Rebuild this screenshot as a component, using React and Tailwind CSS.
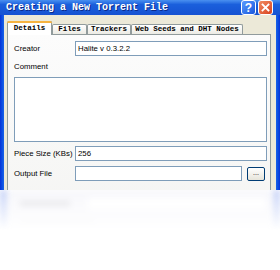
export default function App() {
  return (
    <div className="w-[280px] h-[270px] bg-white overflow-hidden">
      <div className="h-[190px] overflow-hidden flex flex-col">
        <TitleBar />
        <div className="flex flex-1">
          <div className="w-[4px] bg-gradient-to-r from-[#0831d9] to-[#1a63e8]" />
          <div className="flex-1 bg-[#ece9d8] pl-[3px] pr-[5px] pt-[6px]">
            <Tabs />
            <div className="border border-[#919b9c] bg-gradient-to-b from-[#fcfcfc] to-[#f4f4f2] pt-[6px] pl-[6px] pr-[3px] h-[200px]">
              <Row label="Creator" value="Halite v 0.3.2.2" />
              <div className="h-[21px] flex items-center text-[7.8px] text-black font-['Liberation_Sans',sans-serif]">Comment</div>
              <div className="h-[65px] border border-[#7f9db9] bg-white" />
              <div className="mt-[4px]">
                <Row label="Piece Size (KBs)" value="256" />
              </div>
              <div className="mt-[5px] flex items-center h-[15px] text-black">
                <div className="w-[61px] text-[7.8px] font-['Liberation_Sans',sans-serif]">Output File</div>
                <div className="flex-1 h-[15px] border border-[#7f9db9] bg-white" />
                <button className="ml-[5px] mr-[2px] w-[18px] h-[14px] rounded-[2px] border border-[#003c74] bg-gradient-to-b from-white to-[#e6e4da] text-[7px] text-black leading-none pb-[2px] font-['Liberation_Sans',sans-serif]">...</button>
              </div>
            </div>
          </div>
          <div className="w-[4px] bg-gradient-to-r from-[#1a63e8] to-[#0831d9]" />
        </div>
      </div>
      <Reflection />
    </div>
  );
}

function TitleBar() {
  return (
    <div className="h-[21px] flex items-center pl-[6px] pr-[7px] bg-gradient-to-b from-[#4a90f0] via-[#1a5fdc] via-30% to-[#1652d2]">
      <div className="flex-1 text-white font-bold text-[10px] leading-none font-['Liberation_Mono',monospace] [text-shadow:1px_1px_#0b2a8a] whitespace-nowrap">
        Creating a New Torrent File
      </div>
      <div className="flex gap-[2px]">
        <div className="w-[15px] h-[15px] rounded-[3px] border border-white bg-gradient-to-br from-[#5a9bff] to-[#1a55dc] flex items-center justify-center text-white font-bold text-[12px] leading-none font-['Liberation_Sans',sans-serif]">?</div>
        <div className="w-[15px] h-[15px] rounded-[3px] border border-white bg-gradient-to-br from-[#f08a60] to-[#d8401c] flex items-center justify-center">
          <svg width="9" height="9" viewBox="0 0 9 9">
            <path d="M1.5 1.5L7.5 7.5M7.5 1.5L1.5 7.5" stroke="white" strokeWidth="1.8" strokeLinecap="square" />
          </svg>
        </div>
      </div>
    </div>
  );
}

function Tabs() {
  const tab = "h-[10px] border border-b-0 border-[#919b9c] rounded-t-[2px] bg-gradient-to-b from-white to-[#ecebe4] flex items-center justify-center text-[7.5px] font-bold leading-none font-['Liberation_Mono',monospace] whitespace-nowrap";
  return (
    <div className="flex items-end h-[13px]">
      <div className="relative z-10 -mb-px w-[45px] h-[14px] border border-b-0 border-[#919b9c] rounded-t-[2px] bg-white flex flex-col">
        <div className="h-[2px] -mx-px -mt-px rounded-t-[2px] bg-[#f6b340]" />
        <div className="flex-1 flex items-center justify-center text-[7.5px] font-bold leading-none font-['Liberation_Mono',monospace]">Details</div>
      </div>
      <div className={`${tab} w-[35px]`}>Files</div>
      <div className={`${tab} w-[44px]`}>Trackers</div>
      <div className={`${tab} w-[112px]`}>Web Seeds and DHT Nodes</div>
    </div>
  );
}

function Row({ label, value }) {
  return (
    <div className="flex items-center h-[15px] font-['Liberation_Sans',sans-serif] text-[7.8px] text-black">
      <div className="w-[61px] whitespace-nowrap">{label}</div>
      <div className="flex-1 h-[15px] border border-[#7f9db9] bg-white flex items-center pl-[2px]">{value}</div>
    </div>
  );
}

function Reflection() {
  return (
    <div className="h-[80px] overflow-hidden blur-[3px] [mask-image:linear-gradient(to_bottom,black,transparent_50%)]">
      <div className="flex h-full">
        <div className="w-[6px] bg-[#8aa4f0] opacity-60" />
        <div className="flex-1 bg-[#f7f7fb] pl-[14px] pr-[8px] pt-[7px]">
          <div className="flex items-center h-[13px]">
            <div className="w-[50px] h-[4px] bg-[#d8d8dc]" />
            <div className="ml-[18px] flex-1 h-[12px] bg-white" />
          </div>
          <div className="mt-[12px] w-[75px] h-[3px] bg-[#e6e6ea]" />
        </div>
        <div className="w-[6px] bg-[#8aa4f0] opacity-60" />
      </div>
    </div>
  );
}
